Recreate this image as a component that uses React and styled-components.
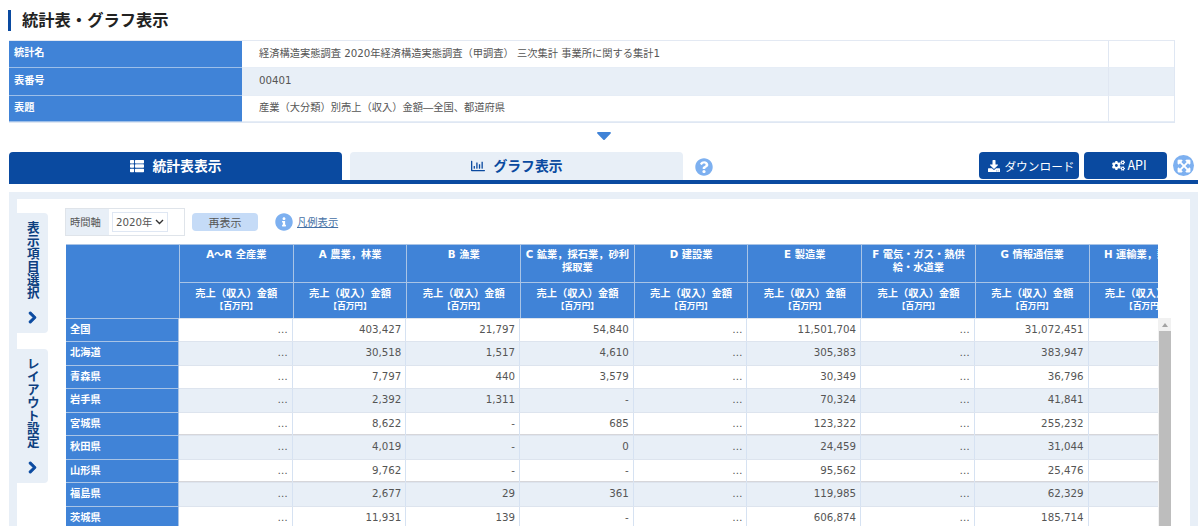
import React from "react";
import styled, { createGlobalStyle } from "styled-components";
import {
  FaThList,
  FaRegChartBar,
  FaDownload,
  FaCogs,
  FaQuestionCircle,
  FaInfoCircle,
  FaChevronRight,
  FaExpandArrowsAlt,
  FaCaretDown,
} from "react-icons/fa";

const BLUE = "#4083d7";
const NAVY = "#0a4aa0";
const PALE = "#e8eff7";
const SKY = "#7db0f0";
const FONT = `"DejaVu Sans", "Noto Sans CJK JP", sans-serif`;
const CJK = `"Noto Sans CJK JP", sans-serif`;

const Global = createGlobalStyle`
  html, body { margin: 0; padding: 0; background: #fff; }
  body { font-family: ${FONT}; color: #555; overflow: hidden; }
  * { box-sizing: border-box; }
`;

const Page = styled.div`
  width: 1200px;
  height: 526px;
  overflow: hidden;
  padding: 10px 2px 0 9px;
`;

const Title = styled.h1`
  margin: 0 0 9px -1px;
  height: 21px;
  border-left: 3px solid ${NAVY};
  padding-left: 11px;
  font: 700 16.3px/19px ${CJK};
  color: #222;
`;

const InfoTable = styled.div`
  width: 1166px;
  border-top: 1px solid #e3e9f3;
  border-right: 1px solid #dfe7f3;
  border-bottom: 1px solid #dfe7f3;
`;

const InfoRow = styled.div`
  display: grid;
  grid-template-columns: 233px 866px 66px;
  height: ${(p) => p.$h}px;
  background: ${(p) => (p.$alt ? PALE : "#fff")};
`;

const InfoHead = styled.div`
  background: ${BLUE};
  color: #fff;
  font: 700 10.2px/1 ${CJK};
  display: flex;
  align-items: center;
  padding: 0 0 3px 5px;
  border-bottom: 1px solid #9dbfe9;
`;

const InfoValue = styled.div`
  display: flex;
  align-items: center;
  padding: 0 0 ${(p) => (p.$tight ? 3 : 4)}px 17px;
  font-size: 10.25px;
  color: #555;
  font-family: ${FONT};
  border-bottom: 1px solid #e6edf6;
`;

const InfoEnd = styled.div`
  border-left: 1px solid #e0e7f2;
  border-bottom: 1px solid #e6edf6;
`;

const CaretRow = styled.div`
  height: 29px;
  display: flex;
  justify-content: center;
  align-items: flex-start;
  color: ${BLUE};
  & svg { display: block; width: 30px; height: 24px; }
`;

const TabBar = styled.div`
  width: 1189px;
  height: 32px;
  border-bottom: 4px solid ${NAVY};
  display: flex;
  align-items: flex-start;
`;

const Tab = styled.div`
  width: 333px;
  height: ${(p) => (p.$active ? 32 : 28)}px;
  margin-right: 8px;
  border-radius: 4px 4px 0 0;
  background: ${(p) => (p.$active ? NAVY : PALE)};
  color: ${(p) => (p.$active ? "#fff" : NAVY)};
  display: flex;
  align-items: center;
  justify-content: center;
  gap: 9px;
  font: 700 13.8px/1 ${CJK};
  padding-bottom: ${(p) => (p.$active ? 4 : 0)}px;
  & svg { font-size: 14px; }
`;

const HelpIcon = styled(FaQuestionCircle)`
  color: ${SKY};
  font-size: 18px;
  margin: 6px 0 0 4px;
`;

const TabActions = styled.div`
  margin-left: auto;
  display: flex;
  align-items: flex-start;
  gap: 5px;
`;

const ActionButton = styled.div`
  width: ${(p) => p.$w}px;
  height: 27px;
  border-radius: 4px;
  background: ${NAVY};
  color: #fff;
  display: flex;
  align-items: center;
  justify-content: center;
  gap: ${(p) => p.$gap}px;
  padding-left: ${(p) => p.$pad}px;
  font: 400 ${(p) => p.$size}px/1 ${CJK};
  & svg { font-size: ${(p) => p.$icon}px; flex: none; }
`;

const ExpandBadge = styled.div`
  width: 21px;
  height: 21px;
  margin: 3px 4px 0 6px;
  border-radius: 50%;
  background: ${SKY};
  color: #fff;
  display: flex;
  align-items: center;
  justify-content: center;
  font-size: 14px;
  & svg { stroke: currentColor; stroke-width: 20; }
`;

const Panel = styled.div`
  width: 1189px;
  margin-top: 8px;
  border: solid ${PALE};
  border-width: 7px 8px 0;
  height: 400px;
  display: flex;
  align-items: flex-start;
`;

const SideColumn = styled.div`
  width: 31px;
  flex: none;
  margin-top: 14px;
  display: flex;
  flex-direction: column;
  gap: 16px;
`;

const SideTab = styled.div`
  height: ${(p) => p.$h}px;
  background: ${PALE};
  border-radius: 0 4px 4px 0;
  display: flex;
  flex-direction: column;
  align-items: center;
  padding-top: ${(p) => p.$top}px;
  color: #0d3f80;
  & svg {
    font-size: 13px;
    color: ${NAVY};
    stroke: currentColor;
    stroke-width: 40;
    margin-top: auto;
    margin-bottom: 9px;
  }
`;

const SideLabel = styled.div`
  writing-mode: vertical-rl;
  font: 700 12.6px/1 ${CJK};
  letter-spacing: 0.4px;
`;

const Content = styled.div`
  margin: 9px 0 0 18px;
  width: 1106px;
`;

const Toolbar = styled.div`
  height: 28px;
  margin: 0 0 8px -1px;
  display: flex;
  align-items: center;
`;

const AxisBox = styled.div`
  width: 120px;
  height: 28px;
  border: 1px solid #dfe4ea;
  display: flex;
  align-items: center;
`;

const AxisLabel = styled.div`
  width: 43px;
  height: 100%;
  background: ${PALE};
  font: 400 10.3px/25px ${CJK};
  padding-left: 4px;
  color: #555;
`;

const AxisSelect = styled.div`
  width: 56px;
  height: 20px;
  margin-left: 3px;
  border: 1px solid #dfe7f3;
  display: flex;
  align-items: center;
  padding-left: 3px;
  gap: 3px;
  white-space: nowrap;
  font: 400 10.25px/1 ${FONT};
  color: #555;
  & svg { flex: none; }
`;

const Refresh = styled.div`
  width: 66px;
  height: 18px;
  margin-left: 7px;
  border-radius: 4px;
  background: #c5dbf7;
  color: #555;
  display: flex;
  align-items: center;
  justify-content: center;
  font: 400 11px/1 ${CJK};
`;

const InfoIcon = styled(FaInfoCircle)`
  color: ${SKY};
  font-size: 18px;
  margin-left: 17px;
`;

const LegendLink = styled.span`
  margin-left: 4px;
  color: #4470a5;
  font: 400 10.3px/1 ${CJK};
  text-decoration: underline;
`;

const Clip = styled.div`
  width: 1092px;
  overflow: hidden;
`;

const cols = "113px repeat(9, 113.7px)";

const HeadGrid = styled.div`
  display: grid;
  grid-template-columns: ${cols};
  grid-template-rows: 38px 35.5px;
  width: 1140px;
`;

const HeadCorner = styled.div`
  grid-row: 1 / span 2;
  background: ${BLUE};
  border-top: 1px solid #a9c4e6;
`;

const HeadCell = styled.div`
  background: ${BLUE};
  color: #fff;
  border-left: 1px solid #a9c4e6;
  border-top: 1px solid #a9c4e6;
  text-align: center;
  font: 700 10.25px/13px ${FONT};
  padding: ${(p) => (p.$sub ? 4 : 3)}px 4px 0;
  & span { display: block; font-size: 8.6px; line-height: 13px; font-weight: 700; }
`;

const BodyRegion = styled.div`
  display: flex;
  align-items: flex-start;
`;

const Row = styled.div`
  display: grid;
  grid-template-columns: ${cols};
  width: 1140px;
  height: 23.5px;
  background: ${(p) => (p.$alt ? PALE : "#fff")};
  border-top: 1px solid #dde4ee;
  box-shadow: ${(p) => (p.$heavy ? "0 -1px 0 #d6d6da" : "none")};
`;

const RowHead = styled.div`
  background: ${BLUE};
  color: #fff;
  font: 700 10.25px/19px ${CJK};
  padding-left: 4px;
  border-right: 1px solid #a9c4e6;
  margin-top: -1px;
  border-top: 1px solid #a9c4e6;
`;

const Value = styled.div`
  border-right: 1px solid #d6e2f2;
  text-align: right;
  padding-right: 4px;
  font: 400 10.25px/20px ${FONT};
  color: #555;
`;

const Scrollbar = styled.div`
  width: 13px;
  height: 220px;
  background: #f1f1f1;
  flex: none;
  display: flex;
  flex-direction: column;
  align-items: center;
`;

const ScrollArrow = styled.div`
  width: 0;
  height: 0;
  margin: 5px 0 4px;
  border-left: 3.5px solid transparent;
  border-right: 3.5px solid transparent;
  border-bottom: 4px solid #a3a3a3;
`;

const ScrollThumb = styled.div`
  width: 12px;
  flex: 1;
  background: #bdbdbd;
`;

const heads = [
  "A～R 全産業",
  "A 農業，林業",
  "B 漁業",
  "C 鉱業，採石業，砂利採取業",
  "D 建設業",
  "E 製造業",
  "F 電気・ガス・熱供給・水道業",
  "G 情報通信業",
  "H 運輸業，郵便業",
];

const rows = [
  ["全国", "…", "403,427", "21,797", "54,840", "…", "11,501,704", "…", "31,072,451"],
  ["北海道", "…", "30,518", "1,517", "4,610", "…", "305,383", "…", "383,947"],
  ["青森県", "…", "7,797", "440", "3,579", "…", "30,349", "…", "36,796"],
  ["岩手県", "…", "2,392", "1,311", "-", "…", "70,324", "…", "41,841"],
  ["宮城県", "…", "8,622", "-", "685", "…", "123,322", "…", "255,232"],
  ["秋田県", "…", "4,019", "-", "0", "…", "24,459", "…", "31,044"],
  ["山形県", "…", "9,762", "-", "-", "…", "95,562", "…", "25,476"],
  ["福島県", "…", "2,677", "29", "361", "…", "119,985", "…", "62,329"],
  ["茨城県", "…", "11,931", "139", "-", "…", "606,874", "…", "185,714"],
];

export default function App() {
  return (
    <Page>
      <Global />
      <Title>統計表・グラフ表示</Title>
      <InfoTable>
        <InfoRow $h={27}>
          <InfoHead>統計名</InfoHead>
          <InfoValue>経済構造実態調査 2020年経済構造実態調査（甲調査） 三次集計 事業所に関する集計1</InfoValue>
          <InfoEnd />
        </InfoRow>
        <InfoRow $h={28} $alt>
          <InfoHead>表番号</InfoHead>
          <InfoValue $tight>00401</InfoValue>
          <InfoEnd />
        </InfoRow>
        <InfoRow $h={26}>
          <InfoHead>表題</InfoHead>
          <InfoValue>産業（大分類）別売上（収入）金額―全国、都道府県</InfoValue>
          <InfoEnd />
        </InfoRow>
      </InfoTable>
      <CaretRow>
        <FaCaretDown />
      </CaretRow>
      <TabBar>
        <Tab $active>
          <FaThList />
          統計表表示
        </Tab>
        <Tab>
          <FaRegChartBar />
          グラフ表示
        </Tab>
        <HelpIcon />
        <TabActions>
          <ActionButton $w={100} $size={11.7} $icon={12} $gap={4} $pad={5}>
            <FaDownload />
            ダウンロード
          </ActionButton>
          <ActionButton $w={83} $size={12.5} $icon={13} $gap={2} $pad={8}>
            <FaCogs />
            API
          </ActionButton>
        </TabActions>
        <ExpandBadge>
          <FaExpandArrowsAlt />
        </ExpandBadge>
      </TabBar>
      <Panel>
        <SideColumn>
          <SideTab $h={120} $top={8}>
            <SideLabel>表示項目選択</SideLabel>
            <FaChevronRight />
          </SideTab>
          <SideTab $h={134} $top={8}>
            <SideLabel>レイアウト設定</SideLabel>
            <FaChevronRight />
          </SideTab>
        </SideColumn>
        <Content>
          <Toolbar>
            <AxisBox>
              <AxisLabel>時間軸</AxisLabel>
              <AxisSelect>
                2020年
                <svg width="9" height="6" viewBox="0 0 9 6">
                  <path d="M1 1l3.5 3.5L8 1" fill="none" stroke="#333" strokeWidth="1.4" />
                </svg>
              </AxisSelect>
            </AxisBox>
            <Refresh>再表示</Refresh>
            <InfoIcon />
            <LegendLink>凡例表示</LegendLink>
          </Toolbar>
          <Clip>
            <HeadGrid>
              <HeadCorner />
              {heads.map((h) => (
                <HeadCell key={h}>{h}</HeadCell>
              ))}
              {heads.map((h) => (
                <HeadCell key={h} $sub>
                  売上（収入）金額
                  <span>【百万円】</span>
                </HeadCell>
              ))}
            </HeadGrid>
          </Clip>
          <BodyRegion>
            <Clip>
              {rows.map((r, i) => (
                <Row key={r[0]} $alt={i % 2 === 1} $heavy={i === 5 || i === 7}>
                  <RowHead>{r[0]}</RowHead>
                  {r.slice(1).map((v, j) => (
                    <Value key={j}>{v}</Value>
                  ))}
                  <Value />
                </Row>
              ))}
            </Clip>
            <Scrollbar>
              <ScrollArrow />
              <ScrollThumb />
            </Scrollbar>
          </BodyRegion>
        </Content>
      </Panel>
    </Page>
  );
}
